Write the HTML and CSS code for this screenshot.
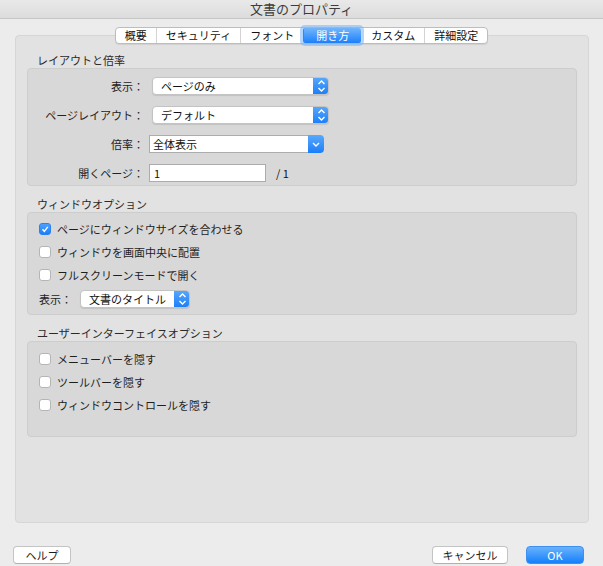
FILE: index.html
```html
<!DOCTYPE html>
<html lang="ja">

<head>
    <meta charset="UTF-8">
    <title>文書のプロパティ</title>
    <link rel="stylesheet" href="styles.css">
</head>

<body>
    <div class="titlebar">文書のプロパティ</div>

    <div class="tabs">
        <span class="tab">概要</span>
        <span class="tab">セキュリティ</span>
        <span class="tab">フォント</span>
        <span class="tab active">開き方</span>
        <span class="tab">カスタム</span>
        <span class="tab">詳細設定</span>
    </div>

    <div class="panel">
        <!-- レイアウトと倍率 -->
        <div class="group-title">レイアウトと倍率</div>
        <div class="group layout-group">
            <span class="form-label">表示：</span>
            <div class="popup popup-wide">
                <span class="popup-text">ページのみ</span>
                <span class="popup-arrows">
                    <svg width="15" height="18" viewBox="0 0 15 18"><path d="M4.5 7 L7.5 4 L10.5 7 M4.5 11 L7.5 14 L10.5 11" /></svg>
                </span>
            </div>

            <span class="form-label">ページレイアウト：</span>
            <div class="popup popup-wide">
                <span class="popup-text">デフォルト</span>
                <span class="popup-arrows">
                    <svg width="15" height="18" viewBox="0 0 15 18"><path d="M4.5 7 L7.5 4 L10.5 7 M4.5 11 L7.5 14 L10.5 11" /></svg>
                </span>
            </div>

            <span class="form-label">倍率：</span>
            <div class="combo">
                <span class="combo-text">全体表示</span>
                <span class="combo-arrow">
                    <svg width="16" height="18" viewBox="0 0 16 18"><path d="M5 8 L8 11 L11 8" /></svg>
                </span>
            </div>

            <span class="form-label">開くページ：</span>
            <div class="page-field">
                <span class="text-field">1</span>
                <span class="page-total">/ 1</span>
            </div>
        </div>

        <!-- ウィンドウオプション -->
        <div class="group-title">ウィンドウオプション</div>
        <div class="group window-group">
            <label class="check-row"><span class="checkbox checked">
                <svg width="12" height="12" viewBox="0 0 12 12"><path d="M3 6.3 L5.2 8.8 L9.3 3.4" /></svg>
            </span>ページにウィンドウサイズを合わせる</label>
            <label class="check-row"><span class="checkbox"></span>ウィンドウを画面中央に配置</label>
            <label class="check-row"><span class="checkbox"></span>フルスクリーンモードで開く</label>
            <div class="show-row">
                <span class="show-label">表示：</span>
                <div class="popup popup-small">
                    <span class="popup-text">文書のタイトル</span>
                    <span class="popup-arrows">
                        <svg width="15" height="18" viewBox="0 0 15 18"><path d="M4.5 7 L7.5 4 L10.5 7 M4.5 11 L7.5 14 L10.5 11" /></svg>
                    </span>
                </div>
            </div>
        </div>

        <!-- ユーザーインターフェイスオプション -->
        <div class="group-title">ユーザーインターフェイスオプション</div>
        <div class="group ui-group">
            <label class="check-row"><span class="checkbox"></span>メニューバーを隠す</label>
            <label class="check-row"><span class="checkbox"></span>ツールバーを隠す</label>
            <label class="check-row"><span class="checkbox"></span>ウィンドウコントロールを隠す</label>
        </div>
    </div>

    <div class="footer">
        <button class="btn btn-help">ヘルプ</button>
        <div class="footer-right">
            <button class="btn btn-cancel">キャンセル</button>
            <button class="btn btn-ok">OK</button>
        </div>
    </div>
</body>

</html>
```

FILE: styles.css
```css
* {
    box-sizing: border-box;
}

body {
    margin: 0;
    width: 603px;
    height: 566px;
    overflow: hidden;
    background: #ececec;
    color: #222;
    font-family: "Noto Sans CJK JP", "Noto Sans", sans-serif;
    font-size: 11px;
    line-height: 16px;
}

/* title bar */
.titlebar {
    height: 19px;
    line-height: 18px;
    text-align: center;
    font-size: 13px;
    color: #3c3c3c;
    background: linear-gradient(#e9e9e9, #dcdcdc);
    border-bottom: 1px solid #c6c6c6;
}

/* segmented tabs */
.tabs {
    position: relative;
    z-index: 1;
    display: flex;
    width: max-content;
    margin: 8px auto 0;
    background: #fff;
    border: 1px solid #bdbdbd;
    border-radius: 4px;
    box-shadow: 0 1px 1px rgba(0, 0, 0, 0.08);
}

.tab {
    height: 15px;
    line-height: 15px;
    padding: 0 9px;
    color: #111;
    border-left: 1px solid #d4d4d4;
}

.tab:first-child {
    border-left: none;
}

.tab.active {
    color: #fff;
    padding: 0 12px;
    background: linear-gradient(#72b6fb, #1c80fb);
    border-left-color: #2f86f5;
    box-shadow: 0 0 0 3px rgba(120, 180, 250, 0.55);
    border-radius: 2px;
}

/* outer panel */
.panel {
    height: 488px;
    margin: -9px 14px 0 15px;
    padding: 16px 11px 0;
    background: #e2e2e2;
    border: 1px solid #d6d6d6;
    border-radius: 4px;
}

.group-title {
    height: 16px;
    padding-left: 10px;
    color: #2a2a2a;
}

.group {
    background: #d8d8d8;
    border: 1px solid #cdcdcd;
    border-radius: 4px;
    margin-bottom: 10px;
}

/* layout group */
.layout-group {
    display: grid;
    grid-template-columns: 116px 1fr;
    column-gap: 5px;
    row-gap: 11px;
    align-items: center;
    padding: 8px 0 3px;
}

.form-label {
    text-align: right;
    height: 18px;
    line-height: 18px;
}

.popup {
    display: flex;
    height: 18px;
    background: #fff;
    border: 1px solid #c3c3c3;
    border-radius: 4px;
    box-shadow: 0 1px 1px rgba(0, 0, 0, 0.1);
    overflow: hidden;
}

.popup-wide {
    width: 177px;
    margin-left: 3px;
}

.popup-text {
    flex: 1;
    padding-left: 8px;
    line-height: 16px;
    color: #111;
}

.popup-arrows {
    width: 16px;
    background: linear-gradient(#5aa8fb, #1a7ef9);
    display: flex;
    align-items: center;
    justify-content: center;
    margin: -1px -1px -1px 0;
}

.popup-arrows svg path,
.combo-arrow svg path {
    fill: none;
    stroke: #fff;
    stroke-width: 1.4;
}

.combo {
    display: flex;
    width: 175px;
    height: 18px;
}

.combo-text {
    flex: 1;
    padding-left: 3px;
    line-height: 16px;
    background: #fff;
    border: 1px solid #acacac;
    border-right: none;
    color: #111;
}

.combo-arrow {
    width: 16px;
    display: flex;
    align-items: center;
    justify-content: center;
    background: linear-gradient(#5aa8fb, #1a7ef9);
    border-radius: 0 4px 4px 0;
}

.page-field {
    display: flex;
    align-items: center;
    gap: 10px;
}

.text-field {
    width: 117px;
    height: 18px;
    line-height: 16px;
    padding-left: 4px;
    background: #fff;
    border: 1px solid #acacac;
    color: #111;
}

.page-total {
    color: #111;
}

/* checkbox rows */
.window-group {
    padding: 9px 0 6px 11px;
    display: flex;
    flex-direction: column;
    gap: 9px;
}

.ui-group {
    height: 96px;
    padding: 10px 0 0 11px;
    display: flex;
    flex-direction: column;
    gap: 9px;
}

.check-row {
    display: flex;
    align-items: center;
    gap: 6px;
    height: 14px;
    line-height: 14px;
    color: #1e1e1e;
}

.checkbox {
    width: 12px;
    height: 12px;
    flex: none;
    background: #fff;
    border: 1px solid #b5b5b5;
    border-radius: 3px;
    display: flex;
    align-items: center;
    justify-content: center;
}

.checkbox.checked {
    background: linear-gradient(#4fa2fb, #1b7ffa);
    border-color: #2a82f0;
}

.checkbox svg {
    display: block;
}

.checkbox svg path {
    fill: none;
    stroke: #fff;
    stroke-width: 1.7;
}

.show-row {
    display: flex;
    align-items: center;
    margin-top: -1px;
}

.show-label {
    width: 41px;
}

.popup-small {
    width: 110px;
}

/* bottom buttons */
.footer {
    display: flex;
    justify-content: space-between;
    margin: 23px 19px 0 13px;
}

.footer-right {
    display: flex;
    gap: 18px;
}

.btn {
    height: 18px;
    padding: 0;
    font-family: "Noto Sans CJK JP", "Noto Sans", sans-serif;
    font-size: 11px;
    line-height: 16px;
    color: #1c1c1c;
    background: #fff;
    border: 1px solid #c4c4c4;
    border-bottom-color: #b0b0b0;
    border-radius: 4px;
}

.btn-help {
    width: 58px;
}

.btn-cancel {
    width: 76px;
}

.btn-ok {
    width: 58px;
    color: #fff;
    background: linear-gradient(#6ab2fb, #1480fb);
    border-color: #3d8ff2;
}
```
